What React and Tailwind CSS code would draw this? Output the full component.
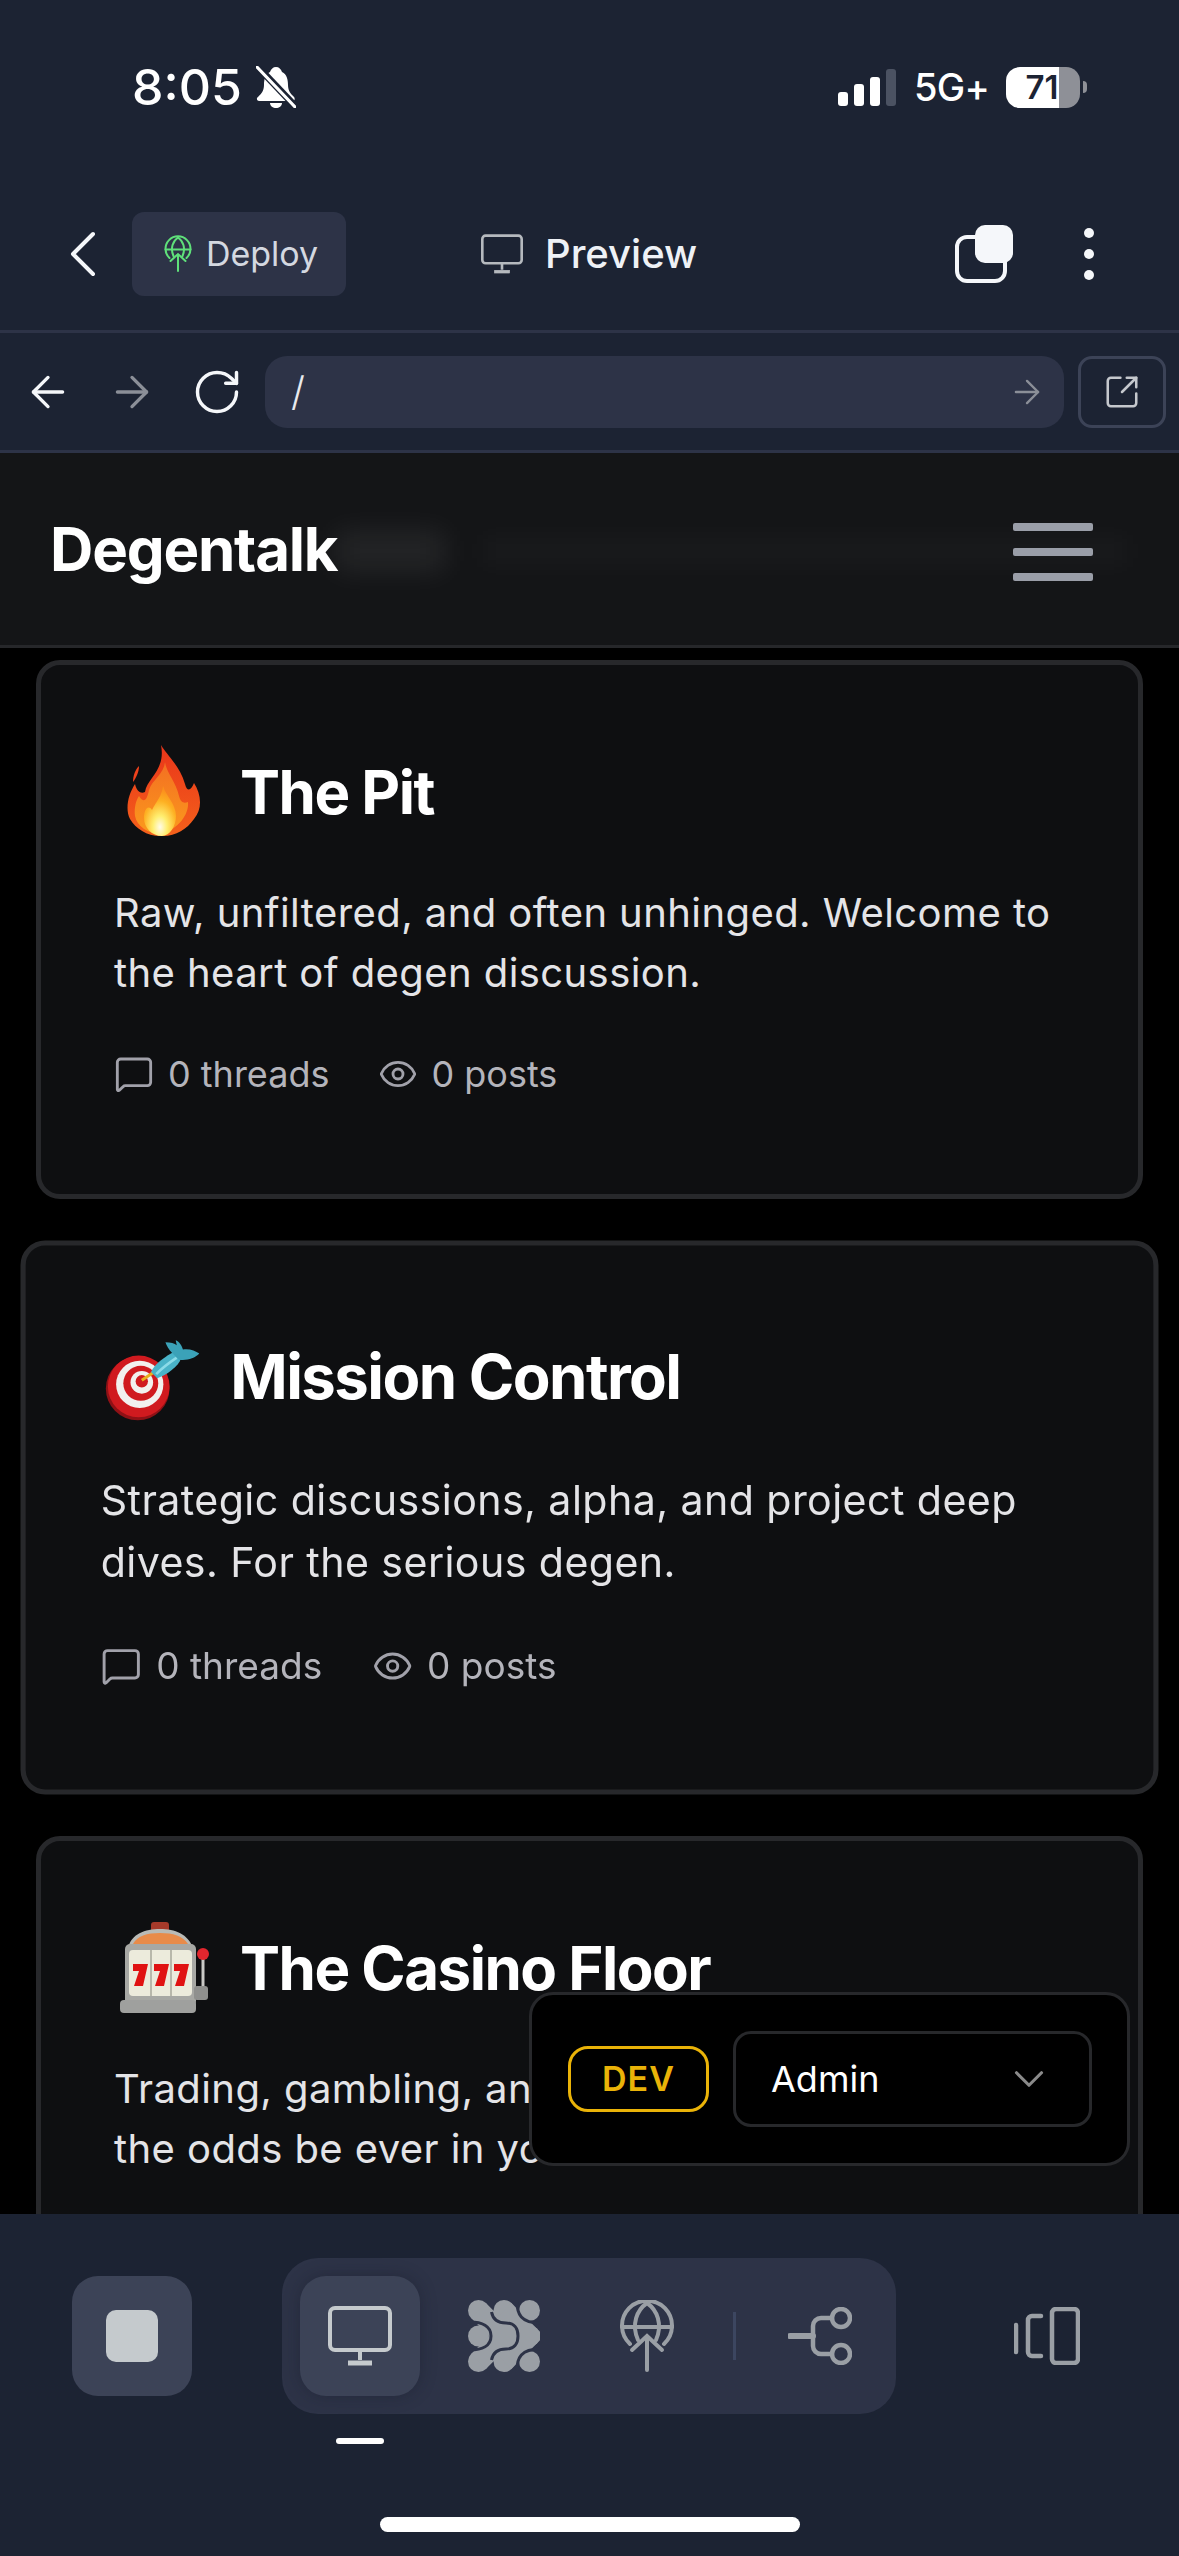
import React from 'react';
import { ArrowLeft, ArrowRight, ChevronDown, ChevronLeft, Eye, MessageSquare, RotateCw, SquareArrowOutUpRight } from 'lucide-react';

const FONT = 'font-["Inter","Noto_Sans",sans-serif]';

const MonitorIcon = ({ className }) => (
    <svg viewBox="0 0 64 60" fill="none" stroke="currentColor" strokeWidth="4" className={className}>
        <rect x="2" y="2" width="60" height="42" rx="5" />
        <path d="M32 44v10" />
        <path d="M20 57h24" strokeWidth="5" />
    </svg>
);

const DeployIcon = ({ className }) => (
    <svg viewBox="0 0 72 72" fill="none" stroke="currentColor" strokeWidth="4" strokeLinecap="round" className={className}>
        <path d="M19 44A25 25 0 1 1 53 44" />
        <path d="M11 27h50" />
        <path d="M27 40C20 24 26 10 36 3C46 10 52 24 45 40" />
        <path d="M36 70V36M21 50l15-14l15 14" />
    </svg>
);

const StackIcon = ({ className }) => (
    <svg viewBox="0 0 72 72" className={className}>
        <g fill="#9a9fa5">
            <circle cx="10.5" cy="10.5" r="10.5" />
            <circle cx="36" cy="10.5" r="10.5" />
            <circle cx="61.5" cy="10.5" r="10.5" />
            <circle cx="10.5" cy="36" r="10.5" />
            <circle cx="36" cy="36" r="10.5" />
            <circle cx="61.5" cy="36" r="10.5" />
            <circle cx="10.5" cy="61.5" r="10.5" />
            <circle cx="36" cy="61.5" r="10.5" />
            <circle cx="61.5" cy="61.5" r="10.5" />
        </g>
        <g fill="none" stroke="#9a9fa5" strokeWidth="21">
            <path d="M10.5 10.5L36 36L10.5 61.5" />
            <path d="M36 10.5L61.5 36L36 61.5" />
            <path d="M36 36H61" />
        </g>
        <g fill="none" stroke="#2d3347" strokeWidth="3">
            <path d="M23.5 12C25 20 31 23 38 23C46 23 50 28 50 36C50 44 46 49 38 49C31 49 25 52 23.5 60" />
            <path d="M2 22C14 22 23 26 23 36C23 46 14 50 2 50" />
            <path d="M49 2C49 14 53 23 72 23" />
            <path d="M49 70C49 58 53 49 72 49" />
        </g>
    </svg>
);

const BranchIcon = ({ className }) => (
    <svg viewBox="0 0 64 58" fill="none" stroke="currentColor" strokeWidth="4.5" strokeLinecap="round" className={className}>
        <circle cx="53" cy="11" r="9" />
        <circle cx="53" cy="47" r="9" />
        <path d="M2 29H25" strokeWidth="6" />
        <path d="M44 11H33a8 8 0 0 0-8 8V39a8 8 0 0 0 8 8H44" />
    </svg>
);

const PanelsIcon = ({ className }) => (
    <svg viewBox="0 0 66 58" fill="none" stroke="currentColor" strokeWidth="4.5" strokeLinecap="round" className={className}>
        <rect x="38" y="2" width="26" height="54" rx="4" />
        <path d="M27 9H18a4 4 0 0 0-4 4V45a4 4 0 0 0 4 4H27" />
        <path d="M2 18V45" />
    </svg>
);

const BellSlash = () => (
    <svg viewBox="0 0 40 42" className="w-[40px] h-[42px]">
        <path fill="#fff" d="M20 1c3 0 5 2 6 5c5 2 6 8 6 13c0 6 3 9 6 12c1 1 1 4-1 4H3c-2 0-3-3-1-4c3-3 6-6 6-12c0-5 1-11 6-13c1-3 3-5 6-5z" />
        <path fill="#fff" d="M14 37h12c0 3-3 5-6 5s-6-2-6-5z" />
        <path d="M1 0L39 40" stroke="#1c2333" strokeWidth="7" />
        <path d="M1 1L39 41" stroke="#fff" strokeWidth="3" strokeLinecap="round" />
    </svg>
);

const FireEmoji = () => (
    <svg viewBox="14 24 96 96" className="w-[96px] h-[96px]">
        <defs>
            <linearGradient id="fire1" x1="0" y1="0" x2="0" y2="1">
                <stop offset="0" stopColor="#e9351a" />
                <stop offset="1" stopColor="#f4611b" />
            </linearGradient>
            <linearGradient id="fire2" x1="0" y1="0" x2="0" y2="1">
                <stop offset="0" stopColor="#f36f22" />
                <stop offset="1" stopColor="#fb9a1d" />
            </linearGradient>
            <radialGradient id="fire3" cx="0.5" cy="0.82" r="0.75">
                <stop offset="0" stopColor="#fffbe8" />
                <stop offset="0.3" stopColor="#ffee70" />
                <stop offset="0.7" stopColor="#fdb022" />
                <stop offset="1" stopColor="#fb8f1c" />
            </radialGradient>
        </defs>
        <path fill="url(#fire1)" d="M61 25C66 34 80 46 85 64C87 72 91 71 94 63C101 74 103 88 94 99C87 109 76 116 63 116C48 117 36 109 30 99C25 89 28 75 35 64C37 72 41 74 45 72C47 58 66 50 61 25Z" />
        <path fill="#f0421c" d="M39 46C39 52 36 58 33 62C33 56 35 50 39 46Z" />
        <path fill="url(#fire2)" d="M65 42C66 52 76 62 79 76C81 84 85 83 88 82C89 92 82 106 63 114C47 114 37 106 35 96C34 88 36 80 39 76C44 84 47 80 49 70C52 60 64 54 65 42Z" />
        <path fill="url(#fire3)" d="M63 66C66 76 76 84 76 96C76 106 70 116 62 116C52 116 44 108 44 98C44 90 48 84 52 90C56 82 62 76 63 66Z" />
    </svg>
);

const DartEmoji = () => (
    <svg viewBox="0 0 96 96" className="w-[96px] h-[96px]">
        <circle cx="36" cy="60" r="31" fill="#8f1116" />
        <circle cx="37" cy="58" r="30" fill="#d01a1f" />
        <circle cx="38" cy="56" r="23" fill="#f2f0ee" />
        <circle cx="39" cy="55" r="17" fill="#d01a1f" />
        <circle cx="40" cy="54" r="11" fill="#f2f0ee" />
        <circle cx="40" cy="53" r="6" fill="#d01a1f" />
        <path d="M40 52L52 44" stroke="#e9b01e" strokeWidth="3" />
        <path d="M49 44C52 36 64 28 72 24L78 31C76 38 64 47 55 50Z" fill="#49b3c8" />
        <path d="M54 46C60 40 68 34 74 30" stroke="#8adbe8" strokeWidth="2.5" fill="none" />
        <path d="M70 26C66 22 64 18 63 15C68 15 72 16 74 18L73 13C76 14 79 18 80 22C86 21 92 23 96 26C91 31 84 33 76 32Z" fill="#3ba2b8" />
    </svg>
);

const SlotEmoji = () => (
    <svg viewBox="-5 0 96 96" className="w-[96px] h-[96px]">
        <rect x="32" y="2" width="18" height="10" rx="3" fill="#a53a2a" />
        <path d="M9 28C12 14 26 9 41 9C56 9 69 14 74 28Z" fill="#b9bab6" />
        <path d="M14 24C18 16 28 13 41 13C54 13 64 16 69 24Z" fill="#e88b4a" />
        <rect x="6" y="24" width="71" height="62" rx="5" fill="#a7a8a4" />
        <rect x="10" y="30" width="63" height="46" rx="4" fill="#ecebdc" />
        <path d="M32 30V76M52 30V76" stroke="#a7a89a" strokeWidth="1.5" />
        <path d="M14 44H29L24 66H15L20 51H14ZM35 44H50L45 66H36L41 51H35ZM55 44H70L65 66H56L61 51H55Z" fill="#e01212" />
        <rect x="1" y="80" width="76" height="13" rx="4" fill="#9fa09e" />
        <path d="M84 36V72" stroke="#c9c9c6" strokeWidth="3" />
        <circle cx="84" cy="34" r="6" fill="#e3262e" />
        <rect x="75" y="66" width="14" height="14" rx="3" fill="#8f908e" />
    </svg>
);

const categories = [
    {
        name: 'The Pit',
        emoji: <FireEmoji />,
        text: 'Raw, unfiltered, and often unhinged. Welcome to the heart of degen discussion.',
    },
    {
        name: 'Mission Control',
        emoji: <DartEmoji />,
        text: 'Strategic discussions, alpha, and project deep dives. For the serious degen.',
        active: true,
    },
    {
        name: 'The Casino Floor',
        emoji: <SlotEmoji />,
        text: 'Trading, gambling, and market speculation. May the odds be ever in your favor.',
    },
];

const CategoryCard = ({ name, emoji, text, active }) => (
    <div className={`shrink-0 border-[5px] border-[#27282b] rounded-[24px] bg-[#0e0f11] pt-[79px] pr-[60px] pl-[73px] pb-[98px] ${active ? 'scale-[1.028]' : ''}`}>
        <div className="flex items-center gap-[30px]">
            <div className="shrink-0">{emoji}</div>
            <h2 className="text-[60px] leading-[96px] font-bold tracking-[-0.025em] text-white">{name}</h2>
        </div>
        <p className="mt-[43px] text-[40px] leading-[60px] tracking-[0.42px] text-[#e4e4e7]">{text}</p>
        <div className="mt-[49px] flex items-center gap-[49px] text-[36px] leading-[44px] text-[#b4b4bb]">
            <div className="flex items-center gap-[14px]">
                <MessageSquare size={40} strokeWidth={1.7} className="text-[#a1a1aa]" />
                <span>0 threads</span>
            </div>
            <div className="flex items-center gap-[13px]">
                <Eye size={40} strokeWidth={1.7} className="text-[#a1a1aa]" />
                <span>0 posts</span>
            </div>
        </div>
    </div>
);

const App = () => {
    return (
        <div className={`relative w-[1179px] h-[2556px] overflow-hidden flex flex-col bg-[#1c2333] text-white ${FONT}`}>
            {/* phone status bar + replit header */}
            <div className="h-[330px] shrink-0 pt-[66px]">
                <div className="h-[42px] flex items-center">
                    <span className="ml-[132px] text-[50px] leading-[42px] font-medium">8:05</span>
                    <div className="ml-[14px]"><BellSlash /></div>
                    <div className="ml-auto flex items-end gap-[6px] h-[38px]">
                        <div className="w-[10px] h-[14px] rounded-[3px] bg-white" />
                        <div className="w-[10px] h-[22px] rounded-[3px] bg-white" />
                        <div className="w-[10px] h-[29px] rounded-[3px] bg-white" />
                        <div className="w-[10px] h-[37px] rounded-[3px] bg-[#4b5262]" />
                    </div>
                    <span className="ml-[18px] text-[38px] leading-[42px] font-medium tracking-[-0.02em]">5G+</span>
                    <div className="ml-[17px] w-[74px] h-[41px] rounded-[14px] bg-[linear-gradient(90deg,#ffffff_72%,#8e9097_72%)] flex items-center justify-center">
                        <span className="text-[33px] leading-none font-semibold text-[#1c2333] ml-[-2px]">71</span>
                    </div>
                    <div className="ml-[3px] mr-[92px] w-[4px] h-[12px] rounded-r-full bg-[#8e9097]" />
                </div>
                <div className="mt-[104px] h-[84px] flex items-center">
                    <ChevronLeft size={80} strokeWidth={1.2} className="ml-[43px] text-[#f5f7fa]" />
                    <div className="ml-[9px] w-[214px] h-[84px] rounded-[12px] bg-[#2d3347] flex items-center justify-center gap-[10px]">
                        <DeployIcon className="w-[36px] h-[38px] text-[#5fe07a]" />
                        <span className="text-[34px] leading-none text-[#d4d8e0]">Deploy</span>
                    </div>
                    <MonitorIcon className="ml-[135px] w-[42px] h-[40px] text-[#b5b9be]" />
                    <span className="ml-[22px] text-[40px] leading-none font-medium text-[#eef1f6]">Preview</span>
                    <div className="relative ml-[258px] w-[58px] h-[58px]">
                        <div className="absolute left-0 bottom-0 w-[52px] h-[48px] rounded-[12px] border-[4px] border-[#f5f7fa]" />
                        <div className="absolute right-0 top-0 w-[38px] h-[38px] rounded-[10px] bg-[#f5f7fa]" />
                    </div>
                    <div className="ml-[71px] flex flex-col gap-[11px]">
                        <div className="w-[10px] h-[10px] rounded-full bg-[#f5f7fa]" />
                        <div className="w-[10px] h-[10px] rounded-full bg-[#f5f7fa]" />
                        <div className="w-[10px] h-[10px] rounded-full bg-[#f5f7fa]" />
                    </div>
                </div>
            </div>

            {/* url bar */}
            <div className="h-[123px] shrink-0 border-y-[3px] border-[#2d3347] flex items-center">
                <ArrowLeft size={50} strokeWidth={1.6} className="ml-[23px] text-[#f5f7fa]" />
                <ArrowRight size={50} strokeWidth={1.6} className="ml-[34px] text-[#8b8f98]" />
                <RotateCw size={52} strokeWidth={1.6} className="ml-[34px] text-[#f5f7fa]" />
                <div className="ml-[22px] w-[799px] h-[72px] rounded-[22px] bg-[#2d3347] flex items-center pl-[26px] pr-[18px]">
                    <span className="text-[40px] leading-none font-light text-[#e8eaee]">/</span>
                    <ArrowRight size={38} strokeWidth={1.5} className="ml-auto text-[#8b8f98]" />
                </div>
                <div className="ml-[14px] w-[88px] h-[72px] rounded-[14px] border-[3px] border-[#3c4357] flex items-center justify-center">
                    <SquareArrowOutUpRight size={38} strokeWidth={1.6} className="text-[#c5c8cd]" />
                </div>
            </div>

            {/* site nav, content is blurring underneath */}
            <div className="relative h-[195px] shrink-0 bg-[#141517] border-b-[3px] border-[#26272a] flex items-center justify-between pl-[50px] pr-[86px]">
                <div className="absolute left-[335px] top-[78px] w-[110px] h-[40px] bg-white/[0.07] blur-[14px]" />
                <div className="absolute left-[480px] top-[82px] w-[650px] h-[32px] bg-white/[0.025] blur-[12px]" />
                <span className="relative text-[60px] leading-none font-bold tracking-[-0.02em] text-white">Degentalk</span>
                <div className="relative mt-[5px] flex flex-col gap-[17px]">
                    <div className="w-[80px] h-[8px] rounded-[2px] bg-[#9a9ea8]" />
                    <div className="w-[80px] h-[8px] rounded-[2px] bg-[#9a9ea8]" />
                    <div className="w-[80px] h-[8px] rounded-[2px] bg-[#9a9ea8]" />
                </div>
            </div>

            {/* category cards */}
            <div className="flex-1 min-h-0 overflow-hidden bg-black pt-[12px] px-[36px] flex flex-col gap-[49px]">
                {categories.map((cat) => (
                    <CategoryCard key={cat.name} {...cat} />
                ))}
            </div>

            {/* replit bottom toolbar */}
            <div className="relative h-[342px] shrink-0 bg-[#1c2333]">
                <div className="pt-[44px] flex items-start">
                    <div className="ml-[72px] mt-[18px] w-[120px] h-[120px] rounded-[26px] bg-[#3c4357] flex items-center justify-center">
                        <div className="w-[52px] h-[52px] rounded-[10px] bg-[#c5cacd]" />
                    </div>
                    <div className="ml-[90px] w-[614px] h-[156px] rounded-[36px] bg-[#2d3347] flex items-center pl-[18px]">
                        <div className="w-[120px] h-[120px] rounded-[26px] bg-[#3c4357] shadow-[0_0_16px_rgba(20,24,36,0.35)] flex items-center justify-center">
                            <MonitorIcon className="w-[64px] h-[60px] text-[#c5cacd]" />
                        </div>
                        <StackIcon className="ml-[48px] w-[72px] h-[72px]" />
                        <DeployIcon className="ml-[71px] w-[72px] h-[72px] text-[#9a9fa5]" />
                        <div className="ml-[50px] w-[3px] h-[48px] bg-[#3c4660]" />
                        <BranchIcon className="ml-[52px] w-[64px] h-[58px] text-[#9a9fa5]" />
                    </div>
                    <PanelsIcon className="ml-[118px] mt-[49px] w-[66px] h-[58px] text-[#9a9fa5]" />
                </div>
                <div className="ml-[336px] mt-[24px] w-[48px] h-[6px] rounded-full bg-white" />
                <div className="ml-[380px] mt-[73px] w-[420px] h-[15px] rounded-full bg-white" />
            </div>

            {/* floating dev role switcher */}
            <div className="absolute left-[529px] top-[1992px] w-[601px] h-[174px] rounded-[24px] border-[3px] border-[#27282b] bg-black flex items-center pl-[36px]">
                <div className="w-[141px] h-[66px] rounded-[20px] border-[3px] border-[#eab308] flex items-center justify-center text-[34px] leading-none font-semibold tracking-[0.03em] text-[#eab308]">
                    DEV
                </div>
                <div className="ml-[24px] w-[359px] h-[96px] rounded-[18px] border-[3px] border-[#27282b] flex items-center justify-between pl-[35px] pr-[35px]">
                    <span className="text-[36px] leading-none text-white">Admin</span>
                    <ChevronDown size={50} strokeWidth={1.5} className="text-[#8a8a8a]" />
                </div>
            </div>
        </div>
    );
};

export default App;
